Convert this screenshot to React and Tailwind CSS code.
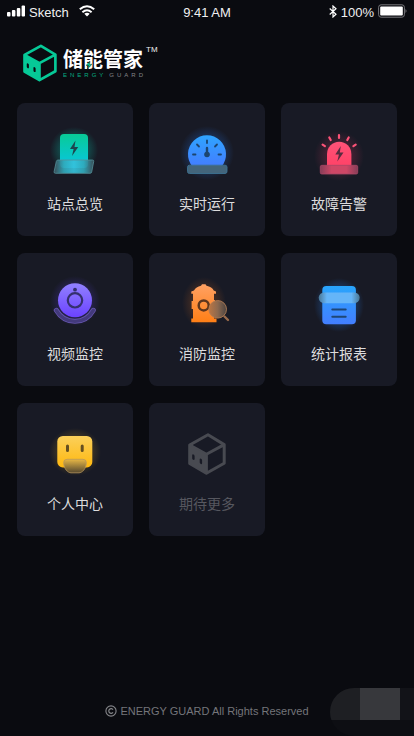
const BOLT = "M32.500 18.500L27 27H30.600L29 34L35.200 25H31.500Z";

function Glow({ id, color, opacity = 0.35 }) {
  return (
    <radialGradient id={id}>
      <stop offset="0.55" stopColor={color} stopOpacity={opacity} />
      <stop offset="1" stopColor={color} stopOpacity="0" />
    </radialGradient>
  );
}

function Fade({ id, from, to }) {
  return (
    <linearGradient id={id} x1="0" y1="0" x2="0" y2="1">
      <stop offset="0" stopColor={from} />
      <stop offset="1" stopColor={to} />
    </linearGradient>
  );
}

function Icon({ children }) {
  return (
    <svg className="size-16" viewBox="0 0 64 64" fill="none" aria-hidden="true">
      {children}
    </svg>
  );
}

function Cube({ className }) {
  return (
    <svg className={className} viewBox="12 13 38 42" fill="none" aria-hidden="true">
      <path
        d="M13.700 25L32 14.800L48.200 24.600V43.200L30.400 53.200L13.700 43.500ZM13.700 25L30.400 34.200L48.200 24.600M30.400 34.200V53"
        stroke="currentColor"
        strokeWidth="3"
        strokeLinejoin="round"
      />
      <path
        fill="currentColor"
        fillRule="evenodd"
        d="M13.500 25L31 34.500V54L13.500 44ZM16.200 35.200V38.200C16.200 39.800 18.600 40.800 18.600 39V36.200C18.600 34.600 16.200 33.500 16.200 35.200ZM23.700 39.300V42.300C23.700 44 26.100 45 26.100 43.200V40.300C26.100 38.700 23.700 37.600 23.700 39.300Z"
      />
    </svg>
  );
}

function StationIcon() {
  return (
    <Icon>
      <defs>
        <Glow id="st-g" color="#04cbb0" opacity={0.28} />
        <Fade id="st-f" from="#08cb96" to="#08c5e4" />
        <linearGradient id="st-b">
          <stop offset="0" stopColor="#3d525c" />
          <stop offset="0.25" stopColor="#31a9bb" />
          <stop offset="0.5" stopColor="#35c2dc" />
          <stop offset="0.75" stopColor="#31a9bb" />
          <stop offset="1" stopColor="#3d525c" />
        </linearGradient>
      </defs>
      <rect x="7" y="5" width="48" height="46" rx="20" fill="url(#st-g)" />
      <rect x="17" y="12" width="28" height="34" rx="4" fill="url(#st-f)" />
      <path d={BOLT} fill="#1d4650" />
      <path d="M15 38H49.500Q51 38 50.700 39.500L48.700 50Q48.400 51.300 47 51.300H12.500Q10.800 51.300 11.100 49.700L13.300 39.500Q13.600 38 15 38Z" fill="url(#st-b)" fillOpacity="0.92" stroke="#538f99" strokeWidth="0.8" />
    </Icon>
  );
}

function GaugeIcon() {
  return (
    <Icon>
      <defs>
        <Glow id="ga-g" color="#277fff" opacity={0.25} />
        <Fade id="ga-f" from="#2fa5ff" to="#437dff" />
      </defs>
      <circle cx="32" cy="31" r="27" fill="url(#ga-g)" />
      <path d="M17.500 44.500A19 19 0 1 1 46.500 44.500Z" fill="url(#ga-f)" />
      <g stroke="#1c456f" strokeWidth="1.800" strokeLinecap="round">
        <path d="M32 18.300V21M22 22.500L24 24.500M42 22.500L40 24.500M18 32.500H20.500M43.500 32.500H46" />
        <path d="M32 26V32" strokeWidth="2.400" />
      </g>
      <circle cx="32" cy="32.500" r="2.800" fill="#1c456f" />
      <rect x="12.500" y="43.200" width="39.500" height="8.300" rx="2" fill="#43657b" stroke="#3c7292" strokeWidth="0.9" />
    </Icon>
  );
}

function AlarmIcon() {
  return (
    <Icon>
      <defs>
        <Glow id="al-g" color="#ff406d" opacity={0.16} />
        <Fade id="al-f" from="#ff5278" to="#ff4166" />
        <linearGradient id="al-b">
          <stop offset="0" stopColor="#863e58" />
          <stop offset="0.3" stopColor="#cf4766" />
          <stop offset="0.7" stopColor="#cf4766" />
          <stop offset="1" stopColor="#863e58" />
        </linearGradient>
      </defs>
      <circle cx="32" cy="34" r="25" fill="url(#al-g)" />
      <path d="M20 46V32A12.200 12.200 0 0 1 44.400 32V46Z" fill="url(#al-f)" />
      <path d={BOLT} transform="translate(1.300 5.500)" fill="#592c40" />
      <path d="M15.600 22.600L17.900 24.200M22.300 15.500L23.700 18M32 13V16M41.700 15.500L40.300 18M48.700 22.600L46.400 24.200" stroke="#fb5277" strokeWidth="2.200" strokeLinecap="round" />
      <rect x="13.300" y="43.300" width="37.400" height="8.700" rx="1.500" fill="url(#al-b)" stroke="#a84664" strokeWidth="0.8" />
    </Icon>
  );
}

function CameraIcon() {
  return (
    <Icon>
      <defs>
        <Glow id="ca-g" color="#6548ff" opacity={0.22} />
        <Fade id="ca-f" from="#9181ff" to="#6b42ff" />
      </defs>
      <circle cx="32" cy="29" r="25" fill="url(#ca-g)" />
      <path d="M13.300 38.300C22 53 42 53 50.300 38.300" stroke="#6756b0" strokeWidth="5" strokeLinecap="round" />
      <path d="M13.300 38.300C22 53 42 53 50.300 38.300" stroke="#433a7c" strokeWidth="3.400" strokeLinecap="round" />
      <circle cx="32" cy="28.300" r="17" fill="url(#ca-f)" />
      <circle cx="32" cy="28.300" r="7.200" stroke="#34306e" strokeWidth="2.200" />
      <circle cx="32" cy="17.700" r="1.900" fill="#34306e" />
    </Icon>
  );
}

function HydrantIcon() {
  return (
    <Icon>
      <defs>
        <Glow id="hy-g" color="#ff7b1d" opacity={0.16} />
        <Fade id="hy-f" from="#ffa163" to="#ff7f16" />
        <linearGradient id="hy-l">
          <stop offset="0" stopColor="#bc7643" />
          <stop offset="0.5" stopColor="#8c694f" />
          <stop offset="1" stopColor="#4c4441" />
        </linearGradient>
      </defs>
      <ellipse cx="29" cy="31" rx="22" ry="26" fill="url(#hy-g)" />
      <path d="M27 12.300H30.500L31.500 13.700Q37 14.800 38.700 18.500L41 19.500V21.700H39V28H40V36H39V46.500H41.500V50.300H16.300V46.500H18V37H16.600V29H18V21.700H16.300V19.500L19 18.500Q21 14.700 26 13.700Z" fill="url(#hy-f)" />
      <circle cx="28.700" cy="33.400" r="5" stroke="#5e361d" strokeWidth="2.500" />
      <path d="M49.500 44.500L53 48" stroke="#996b4c" strokeWidth="2.400" strokeLinecap="round" />
      <circle cx="42.700" cy="37.300" r="8.800" fill="url(#hy-l)" stroke="#b07c54" strokeWidth="0.900" />
    </Icon>
  );
}

function ReportIcon() {
  return (
    <Icon>
      <defs>
        <Glow id="re-g" color="#2686ff" opacity={0.3} />
        <Fade id="re-f" from="#28a5fc" to="#437eff" />
        <linearGradient id="re-b">
          <stop offset="0" stopColor="#4a7896" />
          <stop offset="0.2" stopColor="#65b5f8" />
          <stop offset="0.8" stopColor="#65b5f8" />
          <stop offset="1" stopColor="#4a7896" />
        </linearGradient>
      </defs>
      <rect x="7" y="6" width="50" height="54" rx="22" fill="url(#re-g)" />
      <rect x="15.300" y="14" width="33.600" height="38.300" rx="4" fill="url(#re-f)" />
      <rect x="11.700" y="20.400" width="41" height="10.800" rx="5.400" fill="url(#re-b)" />
      <path d="M25.300 37.500H38.700M25.300 44.800H38.700" stroke="#1e4775" strokeWidth="2" strokeLinecap="round" />
    </Icon>
  );
}

function ProfileIcon() {
  return (
    <Icon>
      <defs>
        <Glow id="pr-g" color="#ffbe20" opacity={0.2} />
        <Fade id="pr-f" from="#fbd05b" to="#ffb80f" />
        <Fade id="pr-b" from="#e6b646" to="#55482f" />
      </defs>
      <rect x="6" y="6" width="52" height="48" rx="22" fill="url(#pr-g)" />
      <rect x="14.300" y="14" width="35" height="31.400" rx="5.500" fill="url(#pr-f)" />
      <path d="M24.500 24V28.500M39.200 24V28.500" stroke="#654f21" strokeWidth="3" strokeLinecap="round" />
      <path d="M24 37.300H40Q43.300 37.300 43.300 40.500C43.300 47 39 50.800 36 50.800H28C25 50.800 20.700 47 20.700 40.500Q20.700 37.300 24 37.300Z" fill="url(#pr-b)" stroke="#b9975c" strokeWidth="0.800" />
    </Icon>
  );
}

function MoreIcon() {
  return (
    <span className="flex size-16 items-center justify-center">
      <Cube className="h-[42px] w-[38px] text-[#484a51]" />
    </span>
  );
}

const TILES = [
  { label: "站点总览", icon: StationIcon },
  { label: "实时运行", icon: GaugeIcon },
  { label: "故障告警", icon: AlarmIcon },
  { label: "视频监控", icon: CameraIcon },
  { label: "消防监控", icon: HydrantIcon },
  { label: "统计报表", icon: ReportIcon },
  { label: "个人中心", icon: ProfileIcon },
  { label: "期待更多", icon: MoreIcon, disabled: true },
];

function Tile({ label, icon: Glyph, disabled }) {
  return (
    <button
      type="button"
      disabled={disabled}
      className="flex flex-col items-center rounded-lg bg-[#181a25] pt-[19px] pb-[22px] text-sm leading-5 text-[#dcdcdd] disabled:text-[#56575f]"
    >
      <Glyph />
      <span className="mt-2">{label}</span>
    </button>
  );
}

function StatusBar() {
  return (
    <div className="grid h-[26px] grid-cols-3 items-center px-[7px] text-[13px] leading-4 text-[#f0f0f1]">
      <div className="flex items-center">
        <svg className="mr-1 mb-1 h-3 w-[18px]" viewBox="0 0 18 12" fill="#fff" aria-hidden="true">
          <rect y="7" width="3.500" height="4.500" rx="1" />
          <rect x="4.900" y="5" width="3.500" height="6.500" rx="1" />
          <rect x="9.800" y="3" width="3.500" height="8.500" rx="1" />
          <rect x="14.600" y="0.500" width="3.500" height="11" rx="1" />
        </svg>
        <span>Sketch</span>
        <svg className="mb-1 ml-[10px] h-3 w-4" viewBox="0 0 16 12" fill="none" stroke="#fff" strokeWidth="2" aria-hidden="true">
          <path d="M0.800 4.300Q8 -1.800 15.200 4.300M3.400 7.200Q8 3.300 12.600 7.200" />
          <path d="M8 11.500L5.300 8.800Q8 6.700 10.700 8.800Z" fill="#fff" stroke="none" />
        </svg>
      </div>
      <span className="text-center">9:41 AM</span>
      <div className="flex items-center justify-end">
        <svg className="mr-1 mb-1 h-[13px] w-2" viewBox="0 0 8 13" fill="none" stroke="#fff" strokeWidth="1.200" aria-hidden="true">
          <path d="M0.700 3.500L7 9.200L4 12V1L7 3.800L0.700 9.500" />
        </svg>
        <span className="mr-1">100%</span>
        <svg className="mb-1 h-[14px] w-[29px]" viewBox="0 0 29 14" fill="none" aria-hidden="true">
          <rect x="0.600" y="0.800" width="25.800" height="12.400" rx="2.500" stroke="#77777b" />
          <rect x="2.200" y="2.400" width="22.600" height="9.200" rx="1" fill="#fff" />
          <path d="M27.500 5Q29.500 7 27.500 9Z" fill="#77777b" />
        </svg>
      </div>
    </div>
  );
}

function Brand() {
  return (
    <header className="flex px-[23px] pt-[18px] pb-[21px]">
      <Cube className="h-[38px] w-[34px] text-[#06c997]" />
      <div className="ml-[6px] pt-[5px]">
        <h1 className="relative text-xl leading-[22px] font-bold text-white">
          储能管家
          <svg className="absolute top-3 left-[23px] h-2 w-[6px]" viewBox="0 0 6 8" aria-hidden="true">
            <path d="M4 0L0 4.500H2.500L1.500 8L6 3.200H3.400Z" fill="#06c997" stroke="#0a0b10" strokeWidth="0.400" />
          </svg>
        </h1>
        <p className="mt-px flex w-[83px] justify-between text-[6px] leading-[6px] tracking-[3px]">
          <span className="text-[#06ad83]">ENERGY</span>
          <span className="text-[#85868a]">GUARD</span>
        </p>
      </div>
      <span className="pt-[2px] text-[8px] leading-[8px] text-[#f0f0f1]">TM</span>
    </header>
  );
}

export default function App() {
  return (
    <div className="relative flex min-h-screen flex-col overflow-hidden bg-[#0a0b10] font-['Liberation_Sans','Noto_Sans_CJK_SC',sans-serif]">
      <StatusBar />
      <Brand />
      <main className="grid grid-cols-3 gap-x-4 gap-y-[17px] px-[17px]">
        {TILES.map((tile) => (
          <Tile key={tile.label} {...tile} />
        ))}
      </main>
      <footer className="mt-auto flex items-center justify-center gap-[3px] pt-4 pb-[17px] text-[11px] leading-4 text-[#74757a]">
        <svg className="size-3" viewBox="0 0 12 12" fill="none" stroke="#85868a" aria-hidden="true">
          <circle cx="6" cy="6" r="5.100" strokeWidth="1.100" />
          <path d="M8 4.700A2.300 2.300 0 1 0 8 7.300" strokeWidth="1.200" />
        </svg>
        <span>ENERGY GUARD All Rights Reserved</span>
      </footer>
      <div className="absolute right-0 bottom-0 flex h-12 w-[84px] overflow-hidden rounded-l-full bg-[#0d0e13]" aria-hidden="true">
        <span className="h-8 w-[30px] bg-[#1e1f23]" />
        <span className="h-8 w-10 bg-[#37383c]" />
        <span className="h-8 flex-1 bg-[#121318]" />
      </div>
    </div>
  );
}
